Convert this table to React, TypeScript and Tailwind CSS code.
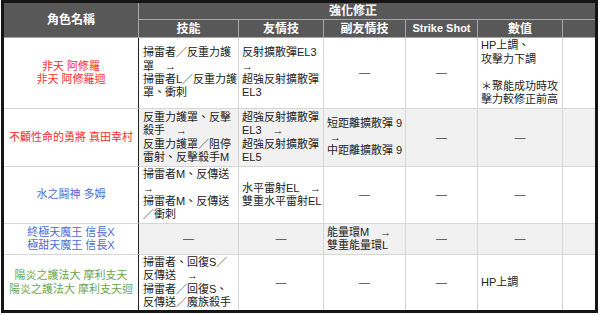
import React from "react";

const font = { fontFamily: '"Liberation Sans", "Noto Sans CJK TC", sans-serif' };

const H = "bg-[#585858] text-white font-bold flex items-center justify-center border-r border-b border-[#a8a8a8]";
const C = "flex items-center border-r border-b border-[#d6d6d6] text-[#222] text-[11px] leading-[13.4px] whitespace-nowrap";

function Dash() {
  return <span className="text-[#444]">—</span>;
}

function Cell({ children, gray, center, last, lastCol, pl = "pl-[3px]" }: { children?: React.ReactNode; gray?: boolean; center?: boolean; last?: boolean; lastCol?: boolean; pl?: string }) {
  return (
    <div
      className={`${C} ${gray ? "bg-[#f1f1f1]" : "bg-white"} ${center ? "justify-center" : pl} ${last ? "border-b-0" : ""} ${lastCol ? "border-r-0" : ""}`}
    >
      <div>{children}</div>
    </div>
  );
}

function Name({ children, color, last }: { children: React.ReactNode; color: string; last?: boolean }) {
  return (
    <div className={`flex items-center justify-center text-center bg-white border-r border-r-[#222] border-b border-b-[#d6d6d6] text-[11px] leading-[13.4px] whitespace-nowrap ${color} ${last ? "border-b-0" : ""}`}>
      <div>{children}</div>
    </div>
  );
}

export default function App() {
  return (
    <div className="w-[600px] h-[315px] bg-white" style={font}>
      <div className="ml-[1px] w-[597px] h-[313px] border-[3px] border-[#151515] grid grid-cols-[135px_100px_85px_82px_72px_85px_32px] grid-rows-[17px_18px_71px_58px_57px_31px_55px]">
        {/* header */}
        <div className={`${H} row-span-2 text-[12px]`}>角色名稱</div>
        <div className="col-span-6 bg-[#585858] text-white font-bold flex items-center border-b border-[#a8a8a8] pl-[190px] text-[12px]">強化修正</div>
        <div className={`${H} text-[12px]`}>技能</div>
        <div className={`${H} text-[12px]`}>友情技</div>
        <div className={`${H} text-[12px]`}>副友情技</div>
        <div className={`${H} text-[11px]`}>Strike Shot</div>
        <div className={`${H} text-[12px]`}>數值</div>
        <div className={`${H} border-r-0`}></div>

        {/* row 1 */}
        <Name color="text-[#ff2d2d]">非天 阿修羅<br />非天 阿修羅迴</Name>
        <Cell pl="pl-[4px]">掃雷者／反重力護<br />罩　→<br />掃雷者L／反重力護<br />罩、衝刺</Cell>
        <Cell>反射擴散彈EL3<br />→<br />超強反射擴散彈<br />EL3</Cell>
        <Cell center><Dash /></Cell>
        <Cell center><Dash /></Cell>
        <Cell>HP上調、<br />攻擊力下調<br /><br />＊聚能成功時攻<br />擊力較修正前高</Cell>
        <Cell lastCol />

        {/* row 2 */}
        <Name color="text-[#ff2d2d]">不顧性命的勇將 真田幸村</Name>
        <Cell gray pl="pl-[4px]">反重力護罩、反擊<br />殺手　→<br />反重力護罩／阻停<br />雷射、反擊殺手M</Cell>
        <Cell gray>超強反射擴散彈<br />EL3　→<br />超強反射擴散彈<br />EL5</Cell>
        <Cell gray>短距離擴散彈 9<br />&nbsp;→<br />中距離擴散彈 9</Cell>
        <Cell gray center><Dash /></Cell>
        <Cell gray center><Dash /></Cell>
        <Cell gray lastCol />

        {/* row 3 */}
        <Name color="text-[#4d6bd4]">水之鬪神 多姆</Name>
        <Cell pl="pl-[4px]">掃雷者M、反傳送<br />→<br />掃雷者M、反傳送<br />／衝刺</Cell>
        <Cell>水平雷射EL　→<br />雙重水平雷射EL</Cell>
        <Cell center><Dash /></Cell>
        <Cell center><Dash /></Cell>
        <Cell center><Dash /></Cell>
        <Cell lastCol />

        {/* row 4 */}
        <Name color="text-[#4d6bd4]">終極天魔王 信長X<br />極甜天魔王 信長X</Name>
        <Cell gray center><Dash /></Cell>
        <Cell gray center><Dash /></Cell>
        <Cell gray>能量環M　→<br />雙重能量環L</Cell>
        <Cell gray center><Dash /></Cell>
        <Cell gray center><Dash /></Cell>
        <Cell gray lastCol />

        {/* row 5 */}
        <Name color="text-[#6aa54e]" last>陽炎之護法大 摩利支天<br />陽炎之護法大 摩利支天迴</Name>
        <Cell last pl="pl-[4px]">掃雷者、回復S／<br />反傳送　→<br />掃雷者／回復S、<br />反傳送／魔族殺手</Cell>
        <Cell last center><Dash /></Cell>
        <Cell last center><Dash /></Cell>
        <Cell last center><Dash /></Cell>
        <Cell last>HP上調</Cell>
        <Cell last lastCol />
      </div>
    </div>
  );
}
